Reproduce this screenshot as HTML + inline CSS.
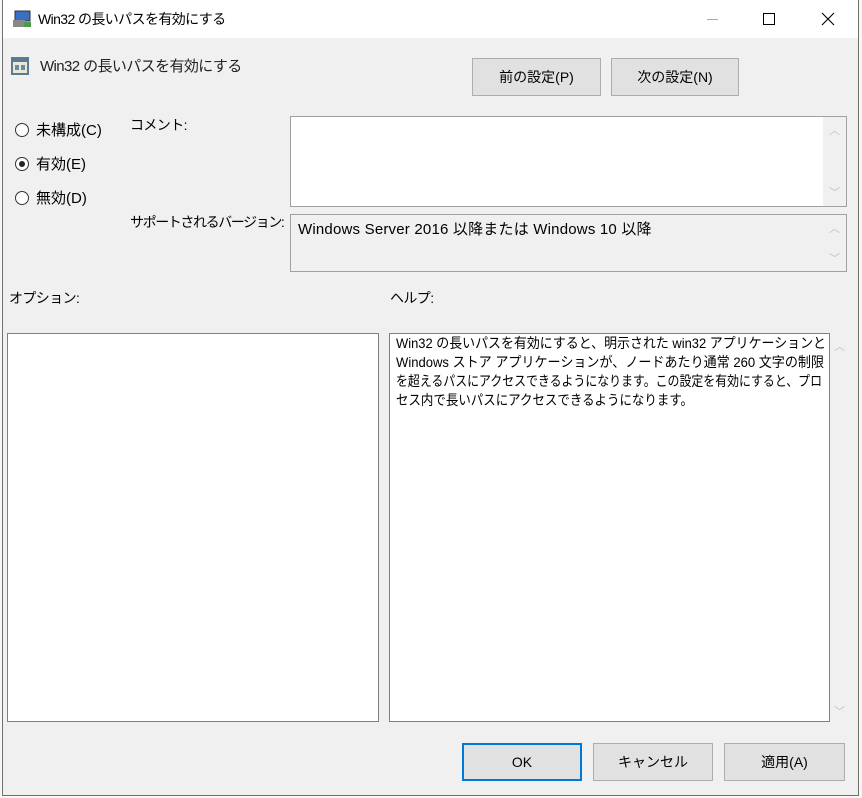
<!DOCTYPE html>
<html><head><meta charset="utf-8"><style>
*{margin:0;padding:0;box-sizing:border-box}
body{width:862px;height:798px;background:#f7f7f7;position:relative;overflow:hidden;font-family:"Liberation Sans","Noto Sans CJK JP",sans-serif;font-size:14px;color:#000}
.a{position:absolute;white-space:nowrap}
.win{left:2px;top:0;width:857px;height:796px;background:#f0f0f0;border:1px solid #707070;border-top:none}
.title{left:3px;top:0;width:855px;height:38px;background:#fff}
.btn{position:absolute;background:#e1e1e1;border:1px solid #adadad;text-align:center;font-size:14px}
.box{position:absolute;background:#fff;border:1px solid #a0a0a0}
.sb{position:absolute;color:#c0c0c0;font-size:11px}
.radio{position:absolute;width:14px;height:14px;border:1px solid #333;border-radius:50%;background:#fff}
.t{letter-spacing:-0.6px}
svg text{font-family:"Liberation Sans","Noto Sans CJK JP",sans-serif;font-size:14px}
</style></head><body>
<div class="a win"></div>
<div class="a title"></div>
<svg class="a" style="left:12px;top:10px" width="20" height="18"><rect x="3" y="1" width="15" height="10" fill="#3a6fc4" stroke="#333"/><rect x="1" y="10" width="12" height="7" fill="#888"/><rect x="12" y="12" width="7" height="5" fill="#4a9a4a"/></svg>
<div class="a t" style="left:38px;top:9px;font-size:14px">Win32 の長いパスを有効にする</div>
<div class="a" style="left:707px;top:19px;width:11px;height:1px;background:#aaa"></div>
<div class="a" style="left:763px;top:13px;width:12px;height:12px;border:1px solid #000"></div>
<svg class="a" style="left:821px;top:12px" width="14" height="14"><path d="M1 1L13 13M13 1L1 13" stroke="#000" stroke-width="1.1"/></svg>
<svg class="a" style="left:10px;top:56px" width="20" height="20"><rect x="1" y="1" width="18" height="18" fill="#5d7a93"/><rect x="3" y="6" width="14" height="11" fill="#e8e8d8"/><rect x="5" y="9" width="4" height="5" fill="#6a8aa0"/><rect x="11" y="9" width="4" height="5" fill="#6a8aa0"/></svg>
<div class="a t" style="left:40px;top:55px;font-size:15px;color:#222">Win32 の長いパスを有効にする</div>
<div class="btn" style="left:472px;top:58px;width:129px;height:38px;line-height:36px">前の設定(P)</div>
<div class="btn" style="left:611px;top:58px;width:128px;height:38px;line-height:36px">次の設定(N)</div>
<div class="radio" style="left:15px;top:123px"></div><div class="a" style="left:36px;top:119px;font-size:15px">未構成(C)</div>
<div class="radio" style="left:15px;top:157px"></div><div class="a" style="left:19px;top:161px;width:6px;height:6px;border-radius:50%;background:#222"></div><div class="a" style="left:36px;top:153px;font-size:15px">有効(E)</div>
<div class="radio" style="left:15px;top:191px"></div><div class="a" style="left:36px;top:187px;font-size:15px">無効(D)</div>
<div class="a t" style="left:130px;top:115px">コメント:</div>
<div class="a" style="left:130px;top:212px;letter-spacing:-1.4px">サポートされるバージョン:</div>
<div class="box" style="left:290px;top:116px;width:557px;height:91px"></div>
<div class="a" style="left:823px;top:117px;width:23px;height:89px;background:#f0f0f0"></div>
<div class="sb" style="left:829px;top:122px">︿</div><div class="sb" style="left:829px;top:184px">﹀</div>
<div class="box" style="left:290px;top:214px;width:557px;height:58px;background:#f0f0f0"></div>
<div class="a" style="left:298px;top:218px;font-size:15px;letter-spacing:0.2px">Windows Server 2016 以降または Windows 10 以降</div>
<div class="sb" style="left:829px;top:220px">︿</div><div class="sb" style="left:829px;top:250px">﹀</div>
<div class="a t" style="left:9px;top:288px">オプション:</div>
<div class="a t" style="left:390px;top:288px">ヘルプ:</div>
<div class="box" style="left:7px;top:333px;width:372px;height:389px;border-color:#808080"></div>
<div class="box" style="left:389px;top:333px;width:441px;height:389px;border-color:#808080"></div>
<svg class="a" style="left:396px;top:334px" width="432" height="80">
<text x="0" y="14" textLength="430" lengthAdjust="spacingAndGlyphs">Win32 の長いパスを有効にすると、明示された win32 アプリケーションと</text>
<text x="0" y="33" textLength="428" lengthAdjust="spacingAndGlyphs">Windows ストア アプリケーションが、ノードあたり通常 260 文字の制限</text>
<text x="0" y="52" textLength="426" lengthAdjust="spacingAndGlyphs">を超えるパスにアクセスできるようになります。この設定を有効にすると、プロ</text>
<text x="0" y="71" textLength="297" lengthAdjust="spacingAndGlyphs">セス内で長いパスにアクセスできるようになります。</text>
</svg>
<div class="sb" style="left:834px;top:338px">︿</div><div class="sb" style="left:834px;top:703px">﹀</div>
<div class="btn" style="left:462px;top:743px;width:120px;height:38px;line-height:34px;border:2px solid #0078d7">OK</div>
<div class="btn" style="left:593px;top:743px;width:120px;height:38px;line-height:36px">キャンセル</div>
<div class="btn" style="left:724px;top:743px;width:121px;height:38px;line-height:36px">適用(A)</div>
</body></html>
